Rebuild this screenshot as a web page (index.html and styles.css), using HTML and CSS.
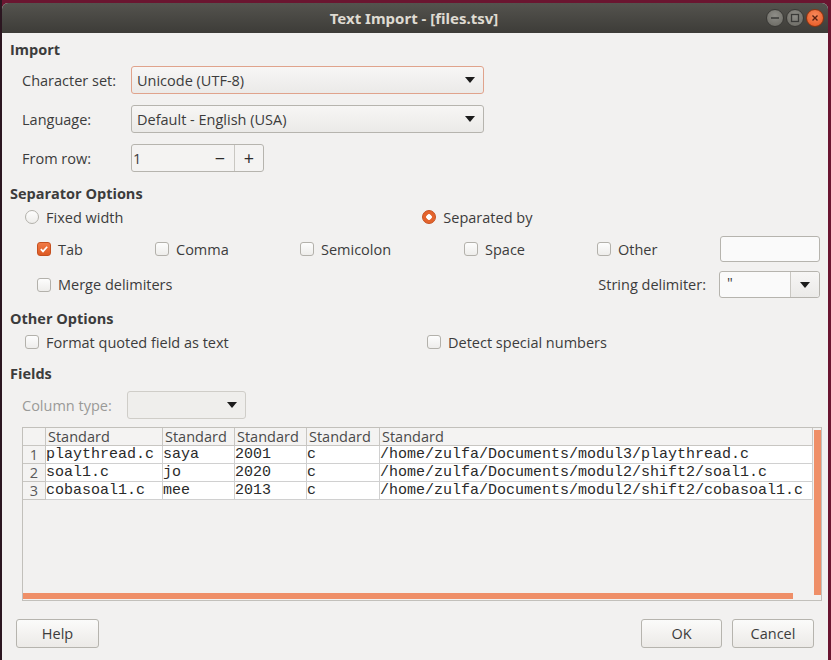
FILE: index.html
```html
<!DOCTYPE html>
<html>
<head>
<meta charset="utf-8">
<link rel="stylesheet" href="styles.css">
</head>
<body>
<div class="window">
  <div class="titlebar">
    <span class="title">Text Import - [files.tsv]</span>
    <div class="wbtns">
      <span class="wbtn"><svg width="10" height="10" viewBox="0 0 10 10"><path d="M1 5h8" stroke="#3a3a38" stroke-width="1.6"/></svg></span>
      <span class="wbtn"><svg width="10" height="10" viewBox="0 0 10 10"><rect x="1.5" y="1.5" width="7" height="7" fill="none" stroke="#3a3a38" stroke-width="1.3"/></svg></span>
      <span class="wbtn close"><svg width="10" height="10" viewBox="0 0 10 10"><path d="M2.5 2.5l5 5M7.5 2.5l-5 5" stroke="#5a2010" stroke-width="1.4"/></svg></span>
    </div>
  </div>
  <div class="content">
    <div class="heading h-import">Import</div>
    <div class="form">
      <div class="frow">
        <span class="lbl">Character set:</span>
        <div class="combo wide focus"><span>Unicode (UTF-8)</span><span class="arrow"></span></div>
      </div>
      <div class="frow">
        <span class="lbl">Language:</span>
        <div class="combo wide"><span>Default - English (USA)</span><span class="arrow"></span></div>
      </div>
      <div class="frow">
        <span class="lbl">From row:</span>
        <div class="spin"><span class="spinval">1</span><span class="sbtn">&minus;</span><span class="sbtn sep">+</span></div>
      </div>
    </div>

    <div class="heading h-sep">Separator Options</div>
    <div class="radiorow">
      <label class="opt r1"><span class="radio"></span>Fixed width</label>
      <label class="opt r2"><span class="radio on"></span>Separated by</label>
    </div>
    <div class="checkrow">
      <label class="opt c-tab"><span class="check on"><svg width="10" height="10" viewBox="0 0 10 10"><path d="M1.8 5.2l2.2 2.2 4.2-4.6" fill="none" stroke="#fff" stroke-width="1.7"/></svg></span>Tab</label>
      <label class="opt c-comma"><span class="check"></span>Comma</label>
      <label class="opt c-semi"><span class="check"></span>Semicolon</label>
      <label class="opt c-space"><span class="check"></span>Space</label>
      <label class="opt c-other"><span class="check"></span>Other</label>
      <div class="entry"></div>
    </div>
    <div class="mergerow">
      <label class="opt c-merge"><span class="check"></span>Merge delimiters</label>
      <span class="strlbl">String delimiter:</span>
      <div class="strcombo"><span class="strval">"</span><span class="strbtn"><span class="arrow"></span></span></div>
    </div>

    <div class="heading h-other">Other Options</div>
    <div class="otherrow">
      <label class="opt o1"><span class="check"></span>Format quoted field as text</label>
      <label class="opt o2"><span class="check"></span>Detect special numbers</label>
    </div>

    <div class="heading h-fields">Fields</div>
    <div class="coltyperow">
      <span class="lbl dim">Column type:</span>
      <div class="combo small disabled"><span></span><span class="arrow"></span></div>
    </div>

    <div class="tablebox">
      <div class="grid">
        <div class="hc rn"></div>
        <div class="hc">Standard</div>
        <div class="hc">Standard</div>
        <div class="hc">Standard</div>
        <div class="hc">Standard</div>
        <div class="hc last">Standard</div>

        <div class="rn">1</div>
        <div class="dc">playthread.c</div>
        <div class="dc">saya</div>
        <div class="dc">2001</div>
        <div class="dc">c</div>
        <div class="dc last">/home/zulfa/Documents/modul3/playthread.c</div>

        <div class="rn">2</div>
        <div class="dc">soal1.c</div>
        <div class="dc">jo</div>
        <div class="dc">2020</div>
        <div class="dc">c</div>
        <div class="dc last">/home/zulfa/Documents/modul2/shift2/soal1.c</div>

        <div class="rn">3</div>
        <div class="dc">cobasoal1.c</div>
        <div class="dc">mee</div>
        <div class="dc">2013</div>
        <div class="dc">c</div>
        <div class="dc last">/home/zulfa/Documents/modul2/shift2/cobasoal1.c</div>
      </div>
      <div class="vscroll"></div>
      <div class="hscroll"></div>
    </div>

    <div class="buttons">
      <button class="btn help">Help</button>
      <span class="spacer"></span>
      <button class="btn ok">OK</button>
      <button class="btn cancel">Cancel</button>
    </div>
  </div>
</div>
</body>
</html>
```

FILE: styles.css
```css
html, body {
  margin: 0;
  padding: 0;
}
body {
  width: 831px;
  height: 660px;
  overflow: hidden;
  background: linear-gradient(90deg, #2b1620 0px, #2b1620 2px, #6a1530 2px);
  font-family: "Open Sans", "Noto Sans", sans-serif;
  color: #3c3c3c;
}
.window {
  margin: 3px 3px 0 2px;
  height: 657px;
  background: #f2f1f0;
  border-radius: 6px 6px 0 0;
  overflow: hidden;
  display: flex;
  flex-direction: column;
}
.titlebar {
  height: 30px;
  flex: none;
  background: linear-gradient(#54534e, #3d3c38);
  position: relative;
  display: flex;
  align-items: center;
  justify-content: center;
}
.title {
  color: #dfdbd2;
  font-family: "Noto Sans", sans-serif;
  font-weight: bold;
  font-size: 15px;
  letter-spacing: 0;
  margin-left: -2px;
}
.wbtns {
  position: absolute;
  right: 4px;
  top: 6px;
  display: flex;
  gap: 2px;
}
.wbtn {
  width: 18px;
  height: 18px;
  border-radius: 50%;
  background: radial-gradient(circle at 50% 35%, #8e8d88, #67665f);
  border: 1px solid #3a3936;
  box-sizing: border-box;
  display: flex;
  align-items: center;
  justify-content: center;
}
.wbtn.close {
  background: radial-gradient(circle at 50% 35%, #f88a5c, #e5541e);
  border-color: #8a3412;
}
.content {
  flex: 1;
  padding: 8px 0 0 8px;
  font-size: 14.5px;
}
.heading {
  font-weight: bold;
  height: 18px;
  line-height: 18px;
  color: #3c3c3c;
  font-size: 14.5px;
}
.form {
  margin-top: 7px;
  display: flex;
  flex-direction: column;
  gap: 11px;
}
.frow {
  display: flex;
  align-items: center;
  height: 28px;
}
.lbl {
  width: 109px;
  padding-left: 12px;
  color: #3c3c3c;
}
.lbl.dim {
  color: #9a9a98;
  width: 105px;
}
.combo {
  height: 28px;
  box-sizing: border-box;
  border: 1px solid #b6b4ae;
  border-radius: 3px;
  background: linear-gradient(#f7f6f5, #ebeae8);
  display: flex;
  align-items: center;
  justify-content: space-between;
  padding: 0 8px 0 5px;
}
.combo.wide {
  width: 353px;
}
.combo.focus {
  border-color: #e0a38c;
}
.combo.small {
  width: 119px;
}
.combo.disabled {
  border-color: #cfcdc8;
  background: #efeeec;
}
.arrow {
  width: 0;
  height: 0;
  border-left: 5px solid transparent;
  border-right: 5px solid transparent;
  border-top: 6px solid #1c1c1c;
}
.spin {
  width: 133px;
  height: 28px;
  box-sizing: border-box;
  border: 1px solid #b6b4ae;
  border-radius: 3px;
  background: #f4f3f2;
  display: flex;
  align-items: center;
}
.spinval {
  flex: 1;
  padding-left: 1px;
}
.sbtn {
  width: 28px;
  text-align: center;
  font-size: 18px;
  line-height: 26px;
  height: 26px;
  color: #2c2c2c;
}
.sbtn.sep {
  border-left: 1px solid #c9c7c2;
}
.h-sep { margin-top: 13px; }
.radiorow, .checkrow, .mergerow, .otherrow, .coltyperow {
  display: flex;
  align-items: center;
  position: relative;
}
.radiorow { margin-top: 5px; height: 18px; }
.opt {
  display: flex;
  align-items: center;
  gap: 7px;
  color: #3c3c3c;
  white-space: nowrap;
}
.radio {
  width: 14px;
  height: 14px;
  box-sizing: border-box;
  border-radius: 50%;
  border: 1px solid #b3b1ab;
  background: linear-gradient(#fdfdfd, #eeedeb);
}
.radio.on {
  background: radial-gradient(circle, #ffffff 0 2.5px, #e4642d 3px);
  border-color: #c5501f;
}
.check {
  width: 14px;
  height: 14px;
  box-sizing: border-box;
  border-radius: 3px;
  border: 1px solid #b3b1ab;
  background: linear-gradient(#fdfdfd, #eeedeb);
  display: flex;
  align-items: center;
  justify-content: center;
}
.check.on {
  background: linear-gradient(#f07a46, #dd5a23);
  border-color: #c5501f;
}
.r1 { margin-left: 15px; }
.r2 { margin-left: 299px; }
.checkrow { margin-top: 10px; height: 26px; }
.c-tab { margin-left: 27px; width: 118px; }
.c-comma { width: 145px; }
.c-semi { width: 164px; }
.c-space { width: 133px; }
.c-other { width: 123px; }
.entry {
  width: 100px;
  height: 26px;
  box-sizing: border-box;
  border: 1px solid #b6b4ae;
  border-radius: 3px;
  background: #fafafa;
}
.mergerow { margin-top: 9px; height: 27px; }
.c-merge { margin-left: 27px; }
.strlbl { margin-left: auto; margin-right: 13px; }
.strcombo {
  width: 101px;
  height: 27px;
  box-sizing: border-box;
  border: 1px solid #b6b4ae;
  border-radius: 3px;
  background: #fafafa;
  display: flex;
  align-items: stretch;
  margin-right: 8px;
}
.strval {
  flex: 1;
  padding-left: 7px;
  line-height: 22px;
}
.strbtn {
  width: 28px;
  border-left: 1px solid #c9c7c2;
  display: flex;
  align-items: center;
  justify-content: center;
  background: linear-gradient(#f7f6f5, #ebeae8);
  border-radius: 0 3px 3px 0;
}
.h-other { margin-top: 12px; }
.otherrow { margin-top: 5px; height: 18px; }
.o1 { margin-left: 15px; width: 402px; }
.h-fields { margin-top: 14px; }
.coltyperow { margin-top: 8px; height: 28px; }
.tablebox {
  margin: 8px 0 0 12px;
  width: 800px;
  height: 174px;
  box-sizing: border-box;
  border: 1px solid #c2c0bb;
  background: #f2f1f0;
  position: relative;
}
.grid {
  display: grid;
  grid-template-columns: 23px 117px 72px 72px 73px 433px;
  grid-auto-rows: 18px;
  width: 790px;
}
.grid > div {
  box-sizing: border-box;
  line-height: 17px;
  white-space: nowrap;
  overflow: hidden;
}
.hc {
  background: #f4f3f2;
  border-right: 1px solid #c8c6c2;
  border-bottom: 1px solid #c8c6c2;
  font-size: 14.5px;
  color: #4a4a4a;
  padding-left: 2px;
}
.rn {
  background: #f4f3f2;
  border-right: 1px solid #c8c6c2;
  border-bottom: 1px solid #c8c6c2;
  color: #5a5a5a;
  font-size: 14.5px;
  text-align: center;
}
.dc {
  background: #ffffff;
  border-right: 1px solid #d0d0d0;
  border-bottom: 1px solid #d0d0d0;
  font-family: "Liberation Mono", monospace;
  font-size: 15px;
  color: #2a2a2a;
  padding-left: 0;
}
.vscroll {
  position: absolute;
  right: 0;
  top: 2px;
  width: 7px;
  height: 165px;
  background: #ef8f68;
}
.hscroll {
  position: absolute;
  left: 0;
  bottom: 1px;
  width: 770px;
  height: 6px;
  background: #ef8f68;
}
.buttons {
  display: flex;
  align-items: center;
  margin: 18px 0 0 6px;
  width: 798px;
}
.spacer { flex: 1; }
.btn {
  height: 29px;
  box-sizing: border-box;
  border: 1px solid #b6b4ae;
  border-radius: 3px;
  background: linear-gradient(#fbfbfa, #eceae7);
  font-family: "Open Sans", "Noto Sans", sans-serif;
  font-size: 14.5px;
  color: #3c3c3c;
  padding: 0;
}
.help { width: 83px; }
.ok { width: 81px; }
.cancel { width: 82px; margin-left: 10px; }
```
